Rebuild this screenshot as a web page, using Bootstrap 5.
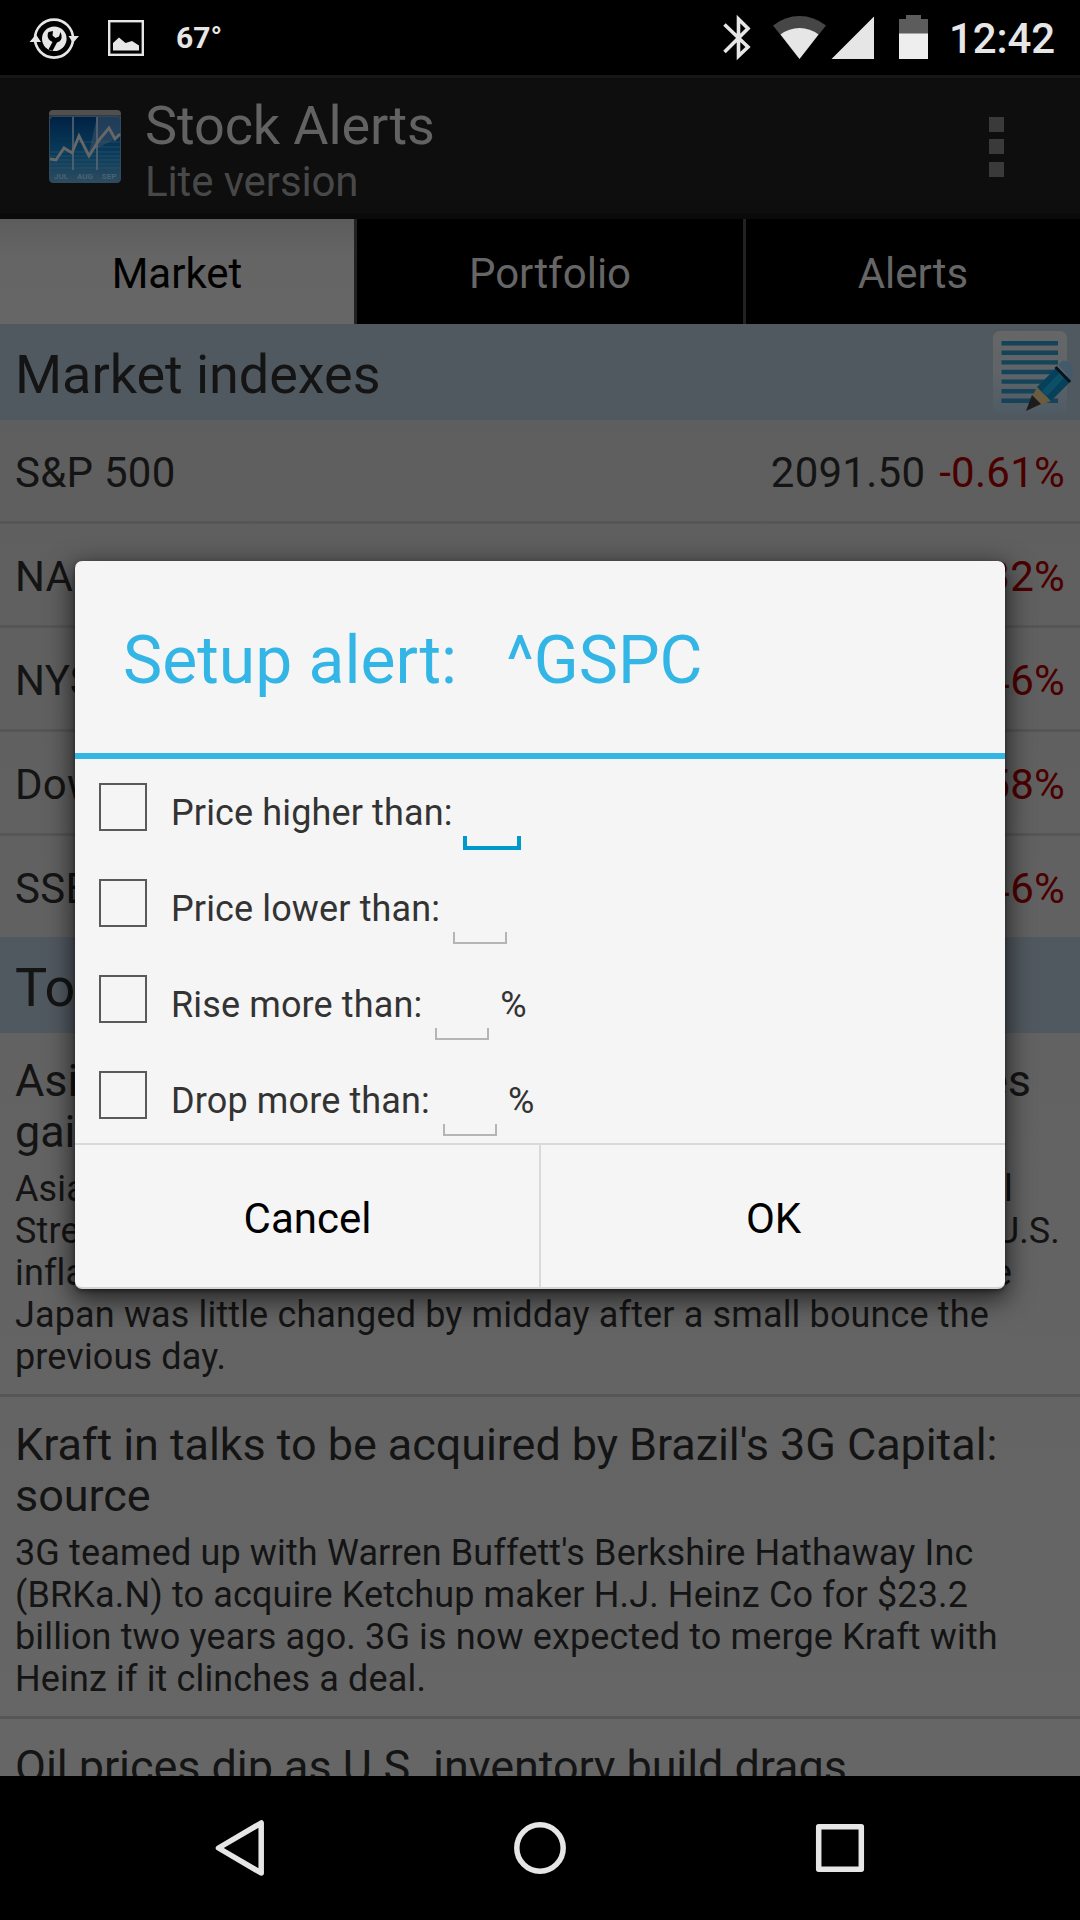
<!DOCTYPE html>
<html lang="en">
<head>
<meta charset="utf-8">
<meta name="viewport" content="width=device-width, initial-scale=1">
<title>Stock Alerts</title>
<link rel="stylesheet" href="https://cdn.jsdelivr.net/npm/bootstrap@5.3.0/dist/css/bootstrap.min.css">
<style>
body{font-family:Roboto,"Liberation Sans",sans-serif;color:#141414;background:#000;font-size:42px;line-height:1}
.screen{width:1080px;height:1920px}
svg{display:block;flex:none}
.status-strip{height:75px;color:#e6e6e6}
.temp{font-size:30px;font-weight:700;line-height:36px;margin-top:20px;margin-left:31px}
.clock{font-size:42px;font-weight:500;line-height:48px;width:140px;padding-left:9px;margin-top:15px;letter-spacing:-.1px}
.app-head{height:144px;background:#0e0e0e;border-top:3px solid #161616;border-bottom:6px solid #0a0a0a;padding:0 76px 0 49px}
.app-icon{margin-top:32px}
.app-name{font-size:54px;line-height:54px;color:#626262;letter-spacing:-.12px}
.app-sub{line-height:58px;color:#484848;letter-spacing:-.12px}
.app-titles{margin-left:24px;padding-top:21px}
.dots{margin-top:39px;display:flex;flex-direction:column;gap:7.3px}
.dots i{width:15px;height:15px;background:#3a3a3a}
.tab-strip{height:105px}
.tab-strip .nav-link{color:#666;padding:4px 0 0;border-radius:0;height:105px;display:flex;align-items:center;justify-content:center}
.tab-strip .nav-link.active{background:linear-gradient(#5c5c5c,#656565 35%,#666);color:#000}
.t1{width:357px;border-right:3px solid #222!important}
.t2{width:389px;border-right:3px solid #222!important}
.t3{width:334px}
.feed{height:1452px;background:linear-gradient(#5e5e5e,#666)}
.sect{height:96px;background:#515960;font-size:54px;padding:5px 7px 0 15px;letter-spacing:-.05px}
.sect svg{margin-top:-5px}
.quote{height:104px;border-bottom:3px solid #565656;padding:5px 15px 0 15px;letter-spacing:.25px}
.quote.last-row{height:101px;border-bottom:0}
.neg{color:#4b0000;margin-left:14px}
.story{padding:22px 15px 16px;border-bottom:3px solid #565656}
.headline{font-size:45px;line-height:51px;white-space:nowrap;letter-spacing:-.07px}
.brief{font-size:36px;line-height:42px;padding-top:11px;white-space:nowrap;letter-spacing:.14px}
.dialog{left:75px;top:561px;width:930px;height:728px;background:#f5f5f5;border-radius:7px;box-shadow:0 8px 26px 3px rgba(0,0,0,.62),0 2px 4px rgba(0,0,0,.4);border-bottom:2px solid #d4d4d4}
.dlg-title{height:198px;border-bottom:6px solid #33b5e5;color:#33b5e5;font-size:66px;padding:7px 48px 0;white-space:pre;border-radius:0}
.opt{height:96px;padding-left:24px;font-size:36px;color:#333}
.opt .form-check-input{width:48px;height:48px;margin:24px 0 0;border:2px solid #5a5a5a;border-radius:0;background:transparent;flex:none}
.opt label,.opt .pct{line-height:42px;margin-top:33px;white-space:pre;letter-spacing:.13px}
.opt label{margin-left:24px}
.opt .pct{margin-left:11px}
.slot{width:54px;height:12px;margin:77px 0 0 13px;border:2px solid #b5b5b5;border-top:0;flex:none}
.slot.on{width:58px;height:14px;margin-left:10px;border:4px solid #0099cc;border-top:0}
.dlg-foot{height:144px;border-top:2px solid #d9d9d9}
.dlg-foot .btn{flex:1;font-size:42px;color:#000;border:0;border-radius:0;padding:4px 0 0 1px}
.dlg-foot .btn+.btn{border-left:2px solid #d9d9d9}
.nav-keys{height:144px;padding-left:204px}
</style>
</head>
<body>
<div class="screen position-relative overflow-hidden">
  <header class="status-strip d-flex align-items-start">
    <svg width="145" height="75" viewBox="0 0 145 75">
      <circle cx="54" cy="38.6" r="19" fill="none" stroke="#e6e6e6" stroke-width="2.6"/>
      <path d="M29.5 42 36 34.5 41 42ZM68.500 36H79L73 43Z" fill="#e6e6e6"/>
      <circle cx="54.300" cy="38.700" r="12.300" fill="#e6e6e6"/>
      <path d="M48.500 32a6.500 6.500 0 0 0 1.500 8.500l2.500 1.500-4 7.500 4 1.500 4.500-8.500q5.500-1.500 4.500-7.500l-1-3-1.500 4.500-3.500 1.500-3-2.500.500-4.500Z" fill="#000"/>
      <rect x="109.200" y="21.200" width="33.600" height="33.600" fill="none" stroke="#e6e6e6" stroke-width="2.400"/>
      <path d="M113 50.500V43l6-5.500 6.500 5.500 6.500-2 7 4.500v5Z" fill="#e6e6e6"/>
    </svg>
    <div class="temp">67°</div>
    <svg class="ms-auto" width="240" height="75" viewBox="700 0 240 75">
      <path d="M724.500 24.500 748 47 738.500 56V19L748 28.500 724.500 52" fill="none" stroke="#e6e6e6" stroke-width="3.600"/>
      <path d="M799.500 59 773 25.500Q785 16 799.500 16T826 25.500Z" fill="#464646"/>
      <path d="M799.500 59 780.500 34.500Q789 28 799.500 28T818.500 34.500Z" fill="#e6e6e6"/>
      <path d="M831.500 59 874 16.500V59Z" fill="#e6e6e6"/>
      <path d="M899 19H906V15H921V19H928V34H899Z" fill="#5c5c5c"/>
      <path d="M899 33.500H928V59H899Z" fill="#eee"/>
    </svg>
    <div class="clock">12:42</div>
  </header>

  <div class="app-head d-flex align-items-start">
    <svg class="app-icon" width="72" height="74" viewBox="0 0 72 74">
      <defs><linearGradient id="blue" x1="0" y1="0" x2="0" y2="1"><stop offset="0" stop-color="#002244"/><stop offset=".6" stop-color="#0b3d5c"/><stop offset="1" stop-color="#2d4c60"/></linearGradient></defs>
      <rect width="72" height="16" rx="4" fill="#505050"/><path d="M0 6H72" stroke="#222"/>
      <rect x=".5" y="6.500" width="71" height="66" rx="3.500" fill="url(#blue)" stroke="#2f4a5c"/>
      <path d="M48 7H69Q71 7 71 10V27L40 42Z" fill="#3c5068" opacity=".55"/>
      <path d="M1 42H71M1 46H71M1 50H71M1 54H71M1 58H71M25 32H71M49 37H71" stroke="#32586e" stroke-width="1" opacity=".6"/>
      <path d="M24 7V60M48 7V60" stroke="#5d6a74" stroke-width="1.500"/>
      <path d="M1 49 7 50 15 38 23 43 30 26 40 46 50 30 60 18 66 29 71 24" fill="none" stroke="#676767" stroke-width="2.800"/>
      <g fill="#4a6273" font-size="8" font-weight="700" text-anchor="middle"><text x="12" y="68.500">JUL</text><text x="36" y="68.500">AUG</text><text x="60" y="68.500">SEP</text></g>
    </svg>
    <div class="app-titles"><div class="app-name">Stock Alerts</div><div class="app-sub">Lite version</div></div>
    <div class="dots ms-auto"><i></i><i></i><i></i></div>
  </div>

  <nav class="nav tab-strip flex-nowrap">
    <a class="nav-link active t1">Market</a><a class="nav-link t2">Portfolio</a><a class="nav-link t3">Alerts</a>
  </nav>

  <main class="feed overflow-hidden">
    <div class="sect d-flex align-items-center justify-content-between">Market indexes
      <svg width="88" height="96" viewBox="985 324 88 96">
        <defs><linearGradient id="paper" x1="0" y1="0" x2="0" y2="1"><stop offset="0" stop-color="#666"/><stop offset=".5" stop-color="#5f6468"/><stop offset="1" stop-color="#4f5b65"/></linearGradient></defs>
        <rect x="993" y="331" width="74" height="82" rx="7" fill="url(#paper)"/>
        <path d="M1001.500 343.200H1058M1001.500 352.800H1058M1001.500 362.400H1058M1001.500 372H1058M1001.500 381.600H1058M1001.500 391.200H1058M1001.500 400.800H1058" stroke="#14435a" stroke-width="4.400"/>
        <path d="M1026 411 1037 386.500 1051 401Z" fill="#6a5c40"/>
        <path d="M1026 411 1032 395 1041 404Z" fill="#1c1c1f"/>
        <path d="M1037 387 1057 367 1071 381 1051 401Z" fill="#06405a"/>
        <path d="M1042 391 1061 371 1066 376 1047 396Z" fill="#0d4f66"/>
        <path d="M1055.500 367 1070 382" stroke="#07151e" stroke-width="3"/>
        <path d="M1058 365 1062 361Q1066 358 1076 370 1078 374 1075 377L1072 380Z" fill="#435a6b"/>
      </svg>
    </div>
    <div class="quote d-flex align-items-center"><span>S&amp;P 500</span><span class="ms-auto">2091.50</span><span class="neg">-0.61%</span></div>
    <div class="quote d-flex align-items-center"><span>NASDAQ Composite</span><span class="ms-auto">4994.73</span><span class="neg">-0.32%</span></div>
    <div class="quote d-flex align-items-center"><span>NYSE</span><span class="ms-auto neg">-0.46%</span></div>
    <div class="quote d-flex align-items-center"><span>Dow Jones</span><span class="ms-auto neg">-0.58%</span></div>
    <div class="quote last-row d-flex align-items-center"><span>SSEC</span><span class="ms-auto neg">-0.46%</span></div>
    <div class="sect d-flex align-items-center">Top news</div>
    <article class="story">
      <div class="headline"><div class="d-flex justify-content-between" style="padding-right:34px"><span>Asian</span><span>shares</span></div><div>gains</div></div>
      <div class="brief">
        <div class="d-flex justify-content-between" style="padding-right:52px"><span>Asian</span><span>Wall</span></div>
        <div class="d-flex justify-content-between" style="padding-right:5px"><span>Street</span><span>U.S.</span></div>
        <div class="d-flex justify-content-between" style="padding-right:53px"><span>inflation</span><span>while</span></div>
        <div>Japan was little changed by midday after a small bounce the</div>
        <div>previous day.</div>
      </div>
    </article>
    <article class="story">
      <div class="headline">Kraft in talks to be acquired by Brazil's 3G Capital:<br>source</div>
      <div class="brief">3G teamed up with Warren Buffett's Berkshire Hathaway Inc<br>(BRKa.N) to acquire Ketchup maker H.J. Heinz Co for $23.2<br>billion two years ago. 3G is now expected to merge Kraft with<br>Heinz if it clinches a deal.</div>
    </article>
    <article class="story"><div class="headline">Oil prices dip as U.S. inventory build drags</div></article>
  </main>

  <footer class="nav-keys">
    <svg width="672" height="144" viewBox="204 1776 672 144" fill="none" stroke="#e6e6e6" stroke-width="5.500" stroke-linejoin="round">
      <path d="M261.200 1823V1873L218.500 1848Z"/>
      <circle cx="540" cy="1848" r="23.200"/>
      <rect x="818.700" y="1826.700" width="42.600" height="42.600"/>
    </svg>
  </footer>

  <section class="dialog position-absolute overflow-hidden" role="dialog">
    <div class="dlg-title d-flex align-items-center">Setup alert:   ^GSPC</div>
    <div class="opt d-flex align-items-start"><input class="form-check-input" type="checkbox" id="o1"><label for="o1">Price higher than:</label><span class="slot on"></span></div>
    <div class="opt d-flex align-items-start"><input class="form-check-input" type="checkbox" id="o2"><label for="o2">Price lower than:</label><span class="slot"></span></div>
    <div class="opt d-flex align-items-start"><input class="form-check-input" type="checkbox" id="o3"><label for="o3">Rise more than:</label><span class="slot"></span><span class="pct">%</span></div>
    <div class="opt d-flex align-items-start"><input class="form-check-input" type="checkbox" id="o4"><label for="o4">Drop more than:</label><span class="slot"></span><span class="pct">%</span></div>
    <div class="dlg-foot d-flex"><button class="btn">Cancel</button><button class="btn">OK</button></div>
  </section>
</div>
<script src="https://cdn.jsdelivr.net/npm/bootstrap@5.3.0/dist/js/bootstrap.bundle.min.js"></script>
</body>
</html>
